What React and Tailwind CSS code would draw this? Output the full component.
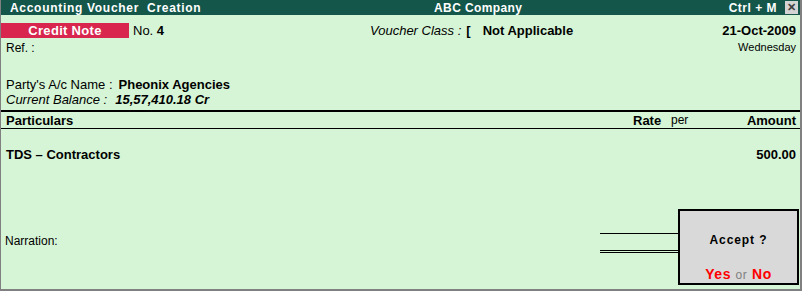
import React from "react";

const font = { fontFamily: '"Liberation Sans", Arial, sans-serif' };

const App = () => {
  return (
    <div
      style={font}
      className="relative h-[291px] w-[802px] overflow-hidden border-b-2 border-l border-r-2 border-[#808080] bg-[#d6f5d6] text-[13px] leading-none text-black"
    >
      {/* title bar */}
      <div className="flex h-[15px] items-center bg-[#14574a] pl-[9px] pr-[2px] text-[12px] font-bold tracking-[0.7px] text-white">
        <span className="w-[424px] whitespace-pre">Accounting Voucher  Creation</span>
        <span className="flex-1 tracking-[0.4px]">ABC Company</span>
        <span className="mr-[8px] tracking-[0.5px]">Ctrl + M</span>
        <span className="flex h-[13px] w-[13px] items-center justify-center bg-[#d4d4d4] text-[11px] font-bold text-[#404040]">
          ✕
        </span>
      </div>

      {/* voucher header */}
      <div className="mt-[8px] flex h-[15px] items-center pr-[4px]">
        <div className="flex h-[15px] w-[128px] items-center justify-center bg-[#d8264f] text-[13px] font-bold tracking-[0.3px] text-white">
          Credit Note
        </div>
        <span className="ml-[4px] w-[237px]">
          No. <b>4</b>
        </span>
        <span className="italic">Voucher Class :</span>
        <span className="ml-[5px] font-bold">[</span>
        <span className="ml-[12px] flex-1 font-bold">Not Applicable</span>
        <span className="font-bold">21-Oct-2009</span>
      </div>
      <div className="mt-[3px] flex h-[13px] items-center pl-[5px] pr-[4px] text-[12px]">
        <span className="flex-1">Ref. :</span>
        <span className="text-[11px]">Wednesday</span>
      </div>

      <div className="mt-[23px] flex h-[15px] items-center pl-[5px]">
        <span>Party's A/c Name :</span>
        <span className="ml-[6px] font-bold">Pheonix Agencies</span>
      </div>
      <div className="flex h-[15px] items-center pl-[5px] italic">
        <span>Current Balance :</span>
        <span className="ml-[8px] font-bold">15,57,410.18 Cr</span>
      </div>

      {/* particulars header */}
      <div className="mt-[3px] flex h-[19px] items-center border-b border-t-2 border-black pl-[5px] pr-[4px] font-bold">
        <span className="flex-1">Particulars</span>
        <span className="w-[38px]">Rate</span>
        <span className="w-[70px] text-[12px] font-normal">per</span>
        <span className="w-[55px] text-right">Amount</span>
      </div>

      <div className="mt-[18px] flex h-[15px] items-center pl-[5px] pr-[4px] font-bold">
        <span className="flex-1">TDS – Contractors</span>
        <span>500.00</span>
      </div>

      {/* narration and totals */}
      <div className="mt-[62px] flex h-[30px] items-start">
        <span className="mt-[11px] w-[599px] pl-[4px] text-[12px]">Narration:</span>
        <div className="mt-[9px] flex w-[78px] flex-col">
          <div className="h-px bg-black" />
          <div className="mt-[16px] h-px bg-black" />
          <div className="mt-px h-px bg-black" />
        </div>
      </div>

      {/* accept dialog */}
      <div className="absolute left-[677px] top-[209px] flex h-[76px] w-[121px] flex-col items-center border-2 border-black bg-[#d9d9d9]">
        <span className="mt-[23px] text-[12px] font-bold tracking-[0.9px]">Accept ?</span>
        <span className="mt-auto mb-[2px] text-[14px] font-bold tracking-[0.6px] text-[#ff0000]">
          Yes <span className="text-[12px] font-normal text-[#808080]">or</span> No
        </span>
      </div>
    </div>
  );
};

export default App;
